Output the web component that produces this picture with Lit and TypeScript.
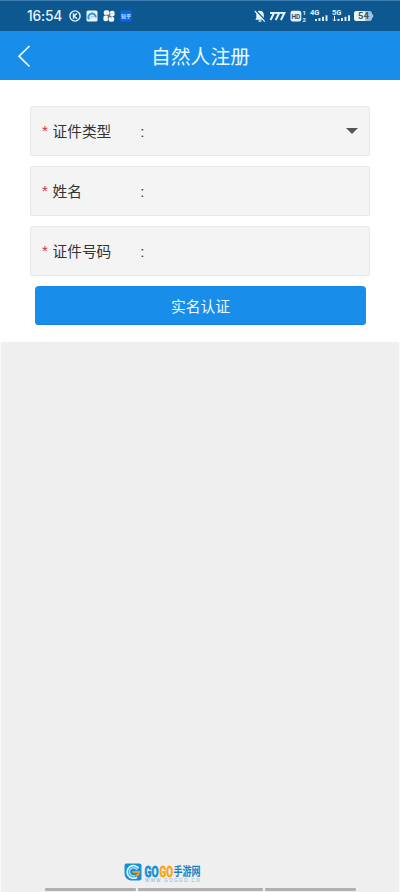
import { LitElement, html, css, svg } from "lit";
import { customElement, property } from "lit/decorators.js";

const bars = (x: number) => svg`
  <g fill="#d9eefa">
    <rect x=${x} y="11" width="2" height="2"/>
    <rect x=${x + 3.5} y="10" width="2" height="3"/>
    <rect x=${x + 7} y="8.8" width="2" height="4.2"/>
    <rect x=${x + 10.5} y="7.3" width="2" height="5.7"/>
  </g>`;

@customElement("status-bar")
class StatusBar extends LitElement {
  static styles = css`
    :host { display: flex; box-sizing: border-box; height: 31px; padding: 0 27px 0; align-items: center;
      justify-content: space-between; background: #0e5891; border-top: 1px solid #3d7fb3;
      font-family: Inter, Roboto, sans-serif; color: #e3f4fc; }
    .group { display: flex; align-items: center; }
    .left { gap: 5px; }
    .time { font-size: 13.8px; font-weight: 500; width: 35px; margin-right: 2px; line-height: 20px; letter-spacing: -0.2px; white-space: nowrap; }
    svg { display: block; flex: none; overflow: visible; }
    text { font-family: Roboto, "Liberation Sans", sans-serif; font-weight: 700; }
    .cjk { font-family: "Noto Sans CJK SC", sans-serif; }
    .right { margin-right: -1px; }
    .bell { margin-right: 3px; }
    .speed { margin-right: 4px; }
    .hd { margin-right: 3px; }
    .net { margin-right: 3px; }
  `;
  render() {
    return html`
      <div class="group left">
        <span class="time">16:54</span>
        <svg width="12" height="12" viewBox="0 0 12 12" fill="none" stroke="#e3f4fc" stroke-width="1.4">
          <circle cx="6" cy="6" r="5.1"/><path d="M4.5 3.3v5.4M8 3.4 5 6l3 2.7"/>
        </svg>
        <svg width="12" height="12" viewBox="0 0 12 12">
          <rect x=".5" y=".5" width="11" height="11" rx="1.5" fill="#e4f5fc"/>
          <path d="M3 9.3A3.7 3.7 0 1 1 9.8 7.5" fill="none" stroke="#3794d6" stroke-width="2"/>
          <path d="M5 8.5a1.7 1.7 0 0 1 3-1.5" fill="none" stroke="#83c6ee"/>
        </svg>
        <svg width="12" height="12" viewBox="0 0 12 12" fill="#edf8fb">
          <rect x=".8" y=".3" width="5.6" height="5" rx="2"/><rect x="6.8" y=".8" width="4.8" height="5.6" rx="2"/>
          <rect x=".4" y="5.6" width="4.8" height="5.6" rx="2"/><rect x="5.6" y="6.700" width="5.600" height="5" rx="2"/>
          <path d="M3.500 4.200 6 6l2.500 1.800M7.500 3.500 6 6 4.500 8.500" stroke="#b06d66" fill="none" stroke-width=".8"/>
        </svg>
        <svg width="12" height="12" viewBox="0 0 12 12">
          <rect x=".5" y=".5" width="11" height="11" rx="1" fill="#0866ec"/>
          <text class="cjk" x="6" y="7.9" font-size="5" text-anchor="middle" fill="#b9e5ff">知乎</text>
        </svg>
      </div>
      <div class="group right">
        <svg class="bell" width="12" height="14" viewBox="0 0 12 14">
          <path d="M1.3 10.8h9.600L9.800 9V5.500C9.800 3.300 8.200 1.800 6 1.800S2.300 3.300 2.300 5.500V9zM4.600 11.300h2.800v1.400H4.600z" fill="#e3f4fc"/>
          <path d="m1.700 1.300 10 10.600" stroke="#0e5891" stroke-width="1.400"/>
          <path d="m.8 2 10 10.6" stroke="#e3f4fc" stroke-width="1.100"/>
        </svg>
        <svg class="speed" width="17" height="10" viewBox="0 0 17 10" fill="none" stroke="#e3f4fc" stroke-width="2">
          <path d="M1 2h4L1.500 9M6.200 2h4L6.700 9M11.400 2h4L11.900 9"/>
        </svg>
        <svg class="hd" width="17" height="14" viewBox="0 0 17 14">
          <rect x=".5" y="1.800" width="10.800" height="10.700" rx="2.200" fill="#e3f4fc"/>
          <text x="5.900" y="9.500" font-size="6.500" text-anchor="middle" fill="#174f7b">HD</text>
          <text x="12.600" y="6.200" font-size="6" fill="#e3f4fc">1</text>
          <text x="12.600" y="12.800" font-size="6" fill="#e3f4fc">2</text>
        </svg>
        <svg class="net" width="19" height="16" viewBox="0 0 19 16">
          <text x="0" y="7" font-size="7.500" fill="#e3f4fc">4G</text>${bars(5)}
        </svg>
        <svg class="net" width="19" height="16" viewBox="0 0 19 16">
          <text x="0" y="7" font-size="7.500" fill="#e3f4fc">5G</text>
          <path d="M2.500 8v5M1 11.500l1.500 1.500L4 11.500" stroke="#e3f4fc" fill="none"/>${bars(5.5)}
        </svg>
        <svg width="20" height="12" viewBox="0 0 20 12">
          <rect x="0" y="1" width="18" height="10" rx="2.700" fill="#9fc4dd"/>
          <path d="M2.700 1H11v10H2.700A2.700 2.700 0 0 1 0 8.300V3.700A2.700 2.700 0 0 1 2.700 1z" fill="#e6f4f9"/>
          <path d="M18 4.200h.8q1.200 1.800 0 3.600H18z" fill="#9fc4dd"/>
          <text x="9.500" y="9.400" font-size="9.500" text-anchor="middle" fill="#3c5569">54</text>
        </svg>
      </div>`;
  }
}

@customElement("form-row")
class FormRow extends LitElement {
  @property() label = "";
  @property({ type: Boolean }) select = false;
  static styles = css`
    :host { display: flex; box-sizing: border-box; height: 50px; align-items: center; background: #f4f4f4;
      border: 1px solid #e9e9e9; border-radius: 2px; padding: 0 11px; color: #333; }
    .star { width: 11px; color: #e02b2b; font: 15px/20px "Liberation Sans", sans-serif; }
    .label { width: 88px; font-size: 14.7px; line-height: 22px; margin-left: -0.5px; }
    .colon { flex: 1; font: 15px/20px Roboto, sans-serif; padding-top: 2px; }
    .arrow { width: 0; height: 0; border: 6.5px solid transparent; border-top-color: #555; border-bottom: 0; margin-top: -1px; }
  `;
  render() {
    return html`<span class="star">*</span><span class="label">${this.label}</span><span class="colon">:</span>
      ${this.select ? html`<span class="arrow"></span>` : ""}`;
  }
}

@customElement("site-mark")
class SiteMark extends LitElement {
  static styles = css`
    :host { display: block; }
    svg { display: block; overflow: visible; }
    .go { font: 700 15.5px "Roboto", sans-serif; stroke-width: .8; }
    .cn { font: 700 12px "Noto Sans CJK SC", sans-serif; }
    .url { font: 400 4.500px "Liberation Sans", sans-serif; }
  `;
  render() {
    return html`<svg width="80" height="22" viewBox="0 0 80 22">
      <path d="M3.500 1.500h13q2 0 2 2V16.500q0 2-2 2H7.500Q1.500 17 1.500 11V3.500q0-2 2-2z" fill="#1690d5"/>
      <path d="M15.600 6.200A6.300 6.300 0 1 0 14 15.200" fill="none" stroke="#e3f6fc" stroke-width="1.700"/>
      <path d="M14 8A4 4 0 1 0 12 13.600" fill="none" stroke="#a9def7" stroke-width="1.500"/>
      <path d="M9.500 10h6.600q-.3 3.200-3.600 4" fill="none" stroke="#f29b22" stroke-width="2"/>
      <text class="go" x="21.500" y="14.600" textLength="14" lengthAdjust="spacingAndGlyphs" fill="#158fd8" stroke="#158fd8">GO</text>
      <text class="go" x="36.500" y="14.600" textLength="13.500" lengthAdjust="spacingAndGlyphs" fill="#f8a51b" stroke="#f8a51b">GO</text>
      <text class="cn" x="50.500" y="14" textLength="27" lengthAdjust="spacingAndGlyphs" fill="#1781c2">手游网</text>
      <text class="url" x="22" y="20" textLength="54.500" fill="#72b4da">WWW.GOGGO.CN</text>
    </svg>`;
  }
}

@customElement("app-root")
class AppRoot extends LitElement {
  static styles = css`
    :host { display: flex; flex-direction: column; box-sizing: border-box; height: 892px; background: #efefef;
      font-family: "Noto Sans CJK SC", sans-serif; overflow: hidden; }
    .header { display: grid; grid-template-columns: 48px 1fr 48px; align-items: center; height: 49px; background: #188eea; color: #e9f8ff; flex: none; }
    .title { text-align: center; font-size: 19.8px; line-height: 28px; padding-left: 1px; }
    .back { display: block; margin-left: 17px; }
    .card { display: flex; flex-direction: column; gap: 10px; box-sizing: border-box; height: 262px; padding: 26px 30px 0; background: #fff; flex: none; }
    .submit { display: block; height: 39px; margin: 0 4px 0 5px; padding: 0 0 1px; border: 0; border-radius: 4px;
      background: #188eea; box-shadow: inset 0 -1px #1580d5; color: #effaff; font: 14.8px "Noto Sans CJK SC", sans-serif; }
    .body { flex: 1; border: solid #fafafa; border-width: 0 1px; }
    .foot { display: flex; flex-direction: column; flex: none; height: 30px; border: solid #fafafa; border-width: 0 1px; }
    .mark { margin-left: 122px; height: 26px; }
    .nav { display: grid; grid-template-columns: 91px 125px 91px; gap: 2px; justify-content: center; }
    .nav span { height: 3px; background: #b0b0b0; border-radius: 1px; }
  `;
  render() {
    return html`
      <status-bar></status-bar>
      <div class="header">
        <svg class="back" width="16" height="24" viewBox="0 0 16 24" fill="none" stroke="#e9f8ff" stroke-width="1.700">
          <path d="M12.500 2 2 12.200 12.500 22.500"/>
        </svg>
        <span class="title">自然人注册</span>
      </div>
      <div class="card">
        <form-row label="证件类型" select></form-row>
        <form-row label="姓名"></form-row>
        <form-row label="证件号码"></form-row>
        <button class="submit">实名认证</button>
      </div>
      <div class="body"></div>
      <div class="foot">
        <site-mark class="mark"></site-mark>
        <div class="nav"><span></span><span></span><span></span></div>
      </div>`;
  }
}
